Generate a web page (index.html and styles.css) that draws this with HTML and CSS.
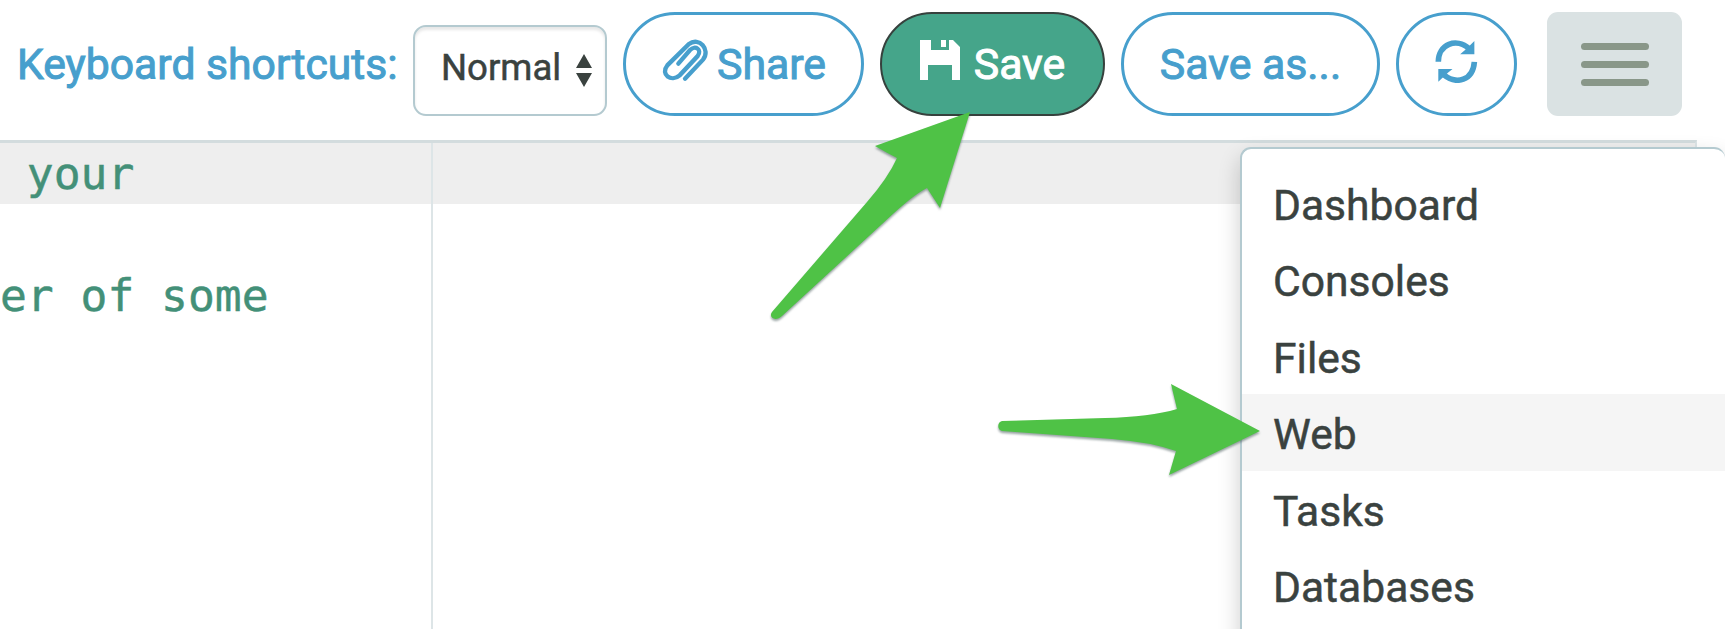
FILE: index.html
```html
<!DOCTYPE html>
<html lang="en">
<head>
<meta charset="utf-8">
<title>Editor</title>
<link rel="stylesheet" href="styles.css">
</head>
<body>
<header class="toolbar">
  <span class="label">Keyboard shortcuts:</span>
  <div class="select"><span>Normal</span>
    <svg class="sorter" viewBox="0 0 16 33"><path d="M8 0L16 14H0ZM0 19H16L8 33Z"/></svg>
  </div>
  <button class="btn share">
    <svg class="clip" viewBox="780 110 150 135"><path d="M852 235L906 178C930 148 894 108 864 131L799 195C777 222 811 247 836 225L890 167C904 148 883 133 867 149L832 190"/></svg>
    <span>Share</span></button>
  <button class="btn save">
    <svg class="disk" viewBox="0 0 40 40"><path d="M0 0H11V10H29V0H33L40 7V40H32V25H8V40H0ZM21 0H26V7H21Z"/></svg>
    <span>Save</span></button>
  <button class="btn save-as"><span>Save as...</span></button>
  <button class="btn refresh">
    <svg class="cycle" viewBox="436 118 128 130"><path class="arc" d="M445 184C445 130 500 110 538 144M554 184C550 240 500 255 460 222"/><path d="M554 121V161H511L525 149L538 137ZM445 244V206H488L474 217L461 229Z"/></svg></button>
  <button class="burger"><i></i><i></i><i></i></button>
</header>
<main class="editor">
  <pre class="line active"> your</pre>
  <pre class="line"> </pre>
  <pre class="line">er of some</pre>
  <div class="margin"></div>
</main>
<nav class="menu">
  <a>Dashboard</a><a>Consoles</a><a>Files</a><a class="hover">Web</a><a>Tasks</a><a>Databases</a>
</nav>
<svg class="arrows" viewBox="0 0 1725 629">
  <path d="M970 112L875 146Q887 153 897 158Q888 178 867 202L772 312C768 318 776 322 782 316L894 213Q915 194 927 188L940 208Z"/>
  <path d="M1260 431L1171 384L1177 409Q1150 417 1105 418L1002 421C997 422 997 430 1002 431L1112 439Q1150 442 1176 451L1169 475Z"/>
</svg>
</body>
</html>
```
FILE: styles.css
```css
* { box-sizing: border-box; }
body { margin: 0; width: 1725px; height: 629px; overflow: hidden; background: #fff; position: relative; font-family: Roboto, "Liberation Sans", sans-serif; font-size: 42.6px; color: #3a423f; -webkit-text-stroke: .5px currentColor; }
.toolbar { height: 140px; display: flex; align-items: flex-start; padding: 12px 0 0 17px; }
.label { width: 396px; line-height: 105px; color: #479fcd; font-size: 42.7px; -webkit-text-stroke: 1px currentColor; white-space: nowrap; }
.select { width: 194px; height: 91px; margin: 13px 16px 0 0; padding: 0 13px 0 26px; border: 2px solid #b4cad0; border-radius: 13px; box-shadow: inset 0 3px 3px #e8e8e8; display: flex; align-items: center; justify-content: space-between; font-size: 36.6px; }
.select span { line-height: 80px; padding-bottom: 6px; }
.sorter { width: 16px; height: 33px; fill: #3a423f; }
.btn { height: 104px; margin: 0 16px 0 0; padding: 0; border: 3px solid #479fcd; border-radius: 52px; background: #fff; color: #479fcd; font: 400 42.8px Roboto, sans-serif; -webkit-text-stroke: 1px currentColor; display: flex; align-items: center; justify-content: center; white-space: nowrap; }
.share { width: 241px; }
.save { width: 225px; background: #45a58a; border: 2px solid #36413d; color: #fff; }
.save-as { width: 259px; }
.refresh { width: 121px; }
.clip { width: 50px; height: 45px; fill: none; stroke: #479fcd; stroke-width: 13; stroke-linecap: round; margin: 0 6px 9px 0; }
.disk { width: 40px; height: 40px; fill: #fff; margin: 0 14px 9px 0; }
.cycle { width: 43px; height: 43px; fill: #479fcd; margin-bottom: 6px; }
.cycle .arc { fill: none; stroke: #479fcd; stroke-width: 17; }
.burger { width: 135px; height: 104px; margin-left: 14px; padding: 0; border: 0; border-radius: 11px; background: #dae2e3; display: flex; flex-direction: column; align-items: center; justify-content: center; gap: 11px; }
.burger i { width: 68px; height: 7px; border-radius: 3.5px; background: #899789; }
.editor { position: relative; width: 1697px; height: 489px; border-top: 3px solid #d3dcde; border-right: 2px solid #dde5e7; }
.line { margin: 0; height: 61px; line-height: 63px; font-family: "DejaVu Sans Mono", monospace; font-size: 44.6px; color: #439078; }
.active { background: #eee; }
.margin { position: absolute; left: 431px; top: 0; width: 2px; height: 489px; background: #dde5e7; }
.menu { position: absolute; left: 1240px; top: 147px; width: 485px; height: 500px; padding-top: 16px; background: #fff; border: 2px solid #b4cad0; border-right: 0; border-radius: 11px; box-shadow: 0 10px 22px rgba(0,0,0,.2); }
.menu a { display: block; height: 76.4px; line-height: 80px; padding-left: 31px; }
.menu .hover { background: #f5f5f5; }
.arrows { position: absolute; left: 0; top: 0; width: 1725px; height: 629px; fill: #4fc246; filter: drop-shadow(0 2px 1px rgba(70,90,90,.55)); }
```
